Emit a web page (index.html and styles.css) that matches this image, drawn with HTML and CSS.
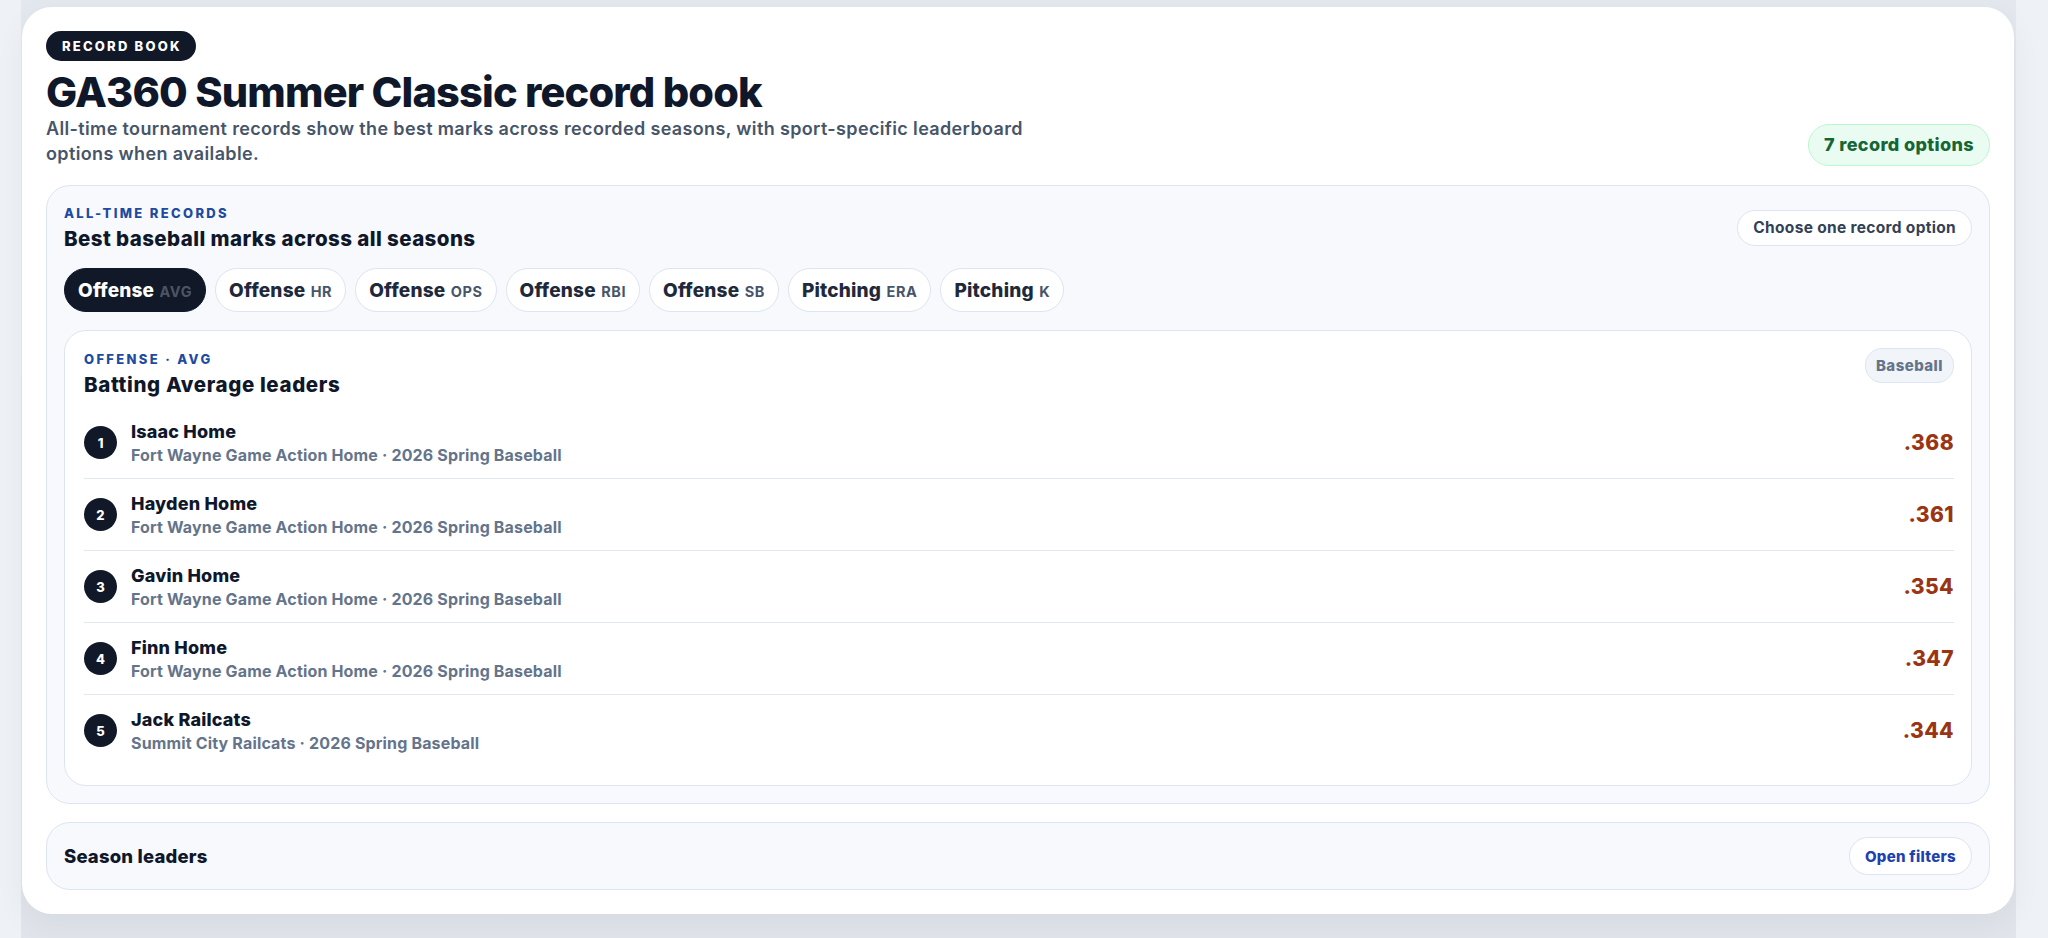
FILE: index.html
```html
<!DOCTYPE html>
<html lang="en">

<head>
    <meta charset="UTF-8">
    <meta name="viewport" content="width=device-width, initial-scale=1.0">
    <title>GA360 Summer Classic record book</title>
    <link rel="stylesheet" href="styles.css">
</head>

<body>
    <div class="shell">
        <main class="card">
            <header class="hero">
                <div class="hero-text">
                    <span class="badge">Record book</span>
                    <h1>GA360 Summer Classic record book</h1>
                    <p>All-time tournament records show the best marks across recorded seasons, with sport-specific leaderboard options when available.</p>
                </div>
                <span class="count-pill">7 record options</span>
            </header>

            <section class="panel records">
                <div class="panel-head">
                    <div>
                        <div class="kicker">All-time records</div>
                        <h2>Best baseball marks across all seasons</h2>
                    </div>
                    <button class="ghost-btn">Choose one record option</button>
                </div>

                <div class="tabs">
                    <button class="tab active">Offense <span>AVG</span></button>
                    <button class="tab">Offense <span>HR</span></button>
                    <button class="tab">Offense <span>OPS</span></button>
                    <button class="tab">Offense <span>RBI</span></button>
                    <button class="tab">Offense <span>SB</span></button>
                    <button class="tab">Pitching <span>ERA</span></button>
                    <button class="tab">Pitching <span>K</span></button>
                </div>

                <div class="leaders">
                    <div class="leaders-head">
                        <div>
                            <div class="kicker">Offense · AVG</div>
                            <h3>Batting Average leaders</h3>
                        </div>
                        <span class="sport-pill">Baseball</span>
                    </div>

                    <ol class="leader-list">
                        <li>
                            <span class="rank">1</span>
                            <div class="who">
                                <div class="name">Isaac Home</div>
                                <div class="meta">Fort Wayne Game Action Home · 2026 Spring Baseball</div>
                            </div>
                            <span class="mark">.368</span>
                        </li>
                        <li>
                            <span class="rank">2</span>
                            <div class="who">
                                <div class="name">Hayden Home</div>
                                <div class="meta">Fort Wayne Game Action Home · 2026 Spring Baseball</div>
                            </div>
                            <span class="mark">.361</span>
                        </li>
                        <li>
                            <span class="rank">3</span>
                            <div class="who">
                                <div class="name">Gavin Home</div>
                                <div class="meta">Fort Wayne Game Action Home · 2026 Spring Baseball</div>
                            </div>
                            <span class="mark">.354</span>
                        </li>
                        <li>
                            <span class="rank">4</span>
                            <div class="who">
                                <div class="name">Finn Home</div>
                                <div class="meta">Fort Wayne Game Action Home · 2026 Spring Baseball</div>
                            </div>
                            <span class="mark">.347</span>
                        </li>
                        <li>
                            <span class="rank">5</span>
                            <div class="who">
                                <div class="name">Jack Railcats</div>
                                <div class="meta">Summit City Railcats · 2026 Spring Baseball</div>
                            </div>
                            <span class="mark">.344</span>
                        </li>
                    </ol>
                </div>
            </section>

            <section class="panel season">
                <h2>Season leaders</h2>
                <button class="ghost-btn link">Open filters</button>
            </section>
        </main>
    </div>
</body>

</html>
```

FILE: styles.css
```css
body {
    font-family: 'Inter', 'Noto Sans', sans-serif;
    background-color: #eef2f6;
    color: #0f172a;
    margin: 0;
    padding: 0;
    height: 938px;
    overflow: hidden;
}

.shell {
    margin-left: 21px;
    width: 1995px;
    min-height: 938px;
    box-sizing: border-box;
    padding: 7px 2px 0 1px;
    background: linear-gradient(180deg, #e3e8ef 0%, #e1e5eb 100%);
}

.card {
    background-color: #fff;
    border-radius: 30px;
    padding: 24px;
    box-shadow: 0 10px 30px rgba(15, 23, 42, 0.05);
}

/* header */

.hero {
    display: flex;
    justify-content: space-between;
    align-items: flex-end;
}

.badge {
    display: inline-block;
    background-color: #111827;
    color: #fff;
    font-size: 13px;
    font-weight: 800;
    letter-spacing: 0.17em;
    text-transform: uppercase;
    line-height: 30px;
    height: 30px;
    padding: 0 14px 0 16px;
    border-radius: 15px;
}

.hero h1 {
    margin: 7px 0 0;
    font-size: 41.5px;
    line-height: 48px;
    font-weight: 800;
    letter-spacing: -0.02em;
    color: #0f172a;
}

.hero p {
    margin: 0;
    max-width: 1010px;
    font-size: 18px;
    line-height: 25px;
    font-weight: 600;
    letter-spacing: 0.02em;
    color: #475569;
}

.count-pill {
    height: 40px;
    line-height: 40px;
    padding: 0 15px;
    border-radius: 21px;
    background-color: #eafcf1;
    border: 1px solid #bbf7d0;
    color: #166534;
    font-size: 18px;
    font-weight: 800;
    letter-spacing: 0.02em;
    white-space: nowrap;
}

/* panels */

.panel {
    background-color: #f7f9fc;
    border: 1px solid #dce5f1;
    border-radius: 24px;
}

.records {
    margin-top: 19px;
    padding: 18px 17px 17px;
}

.panel-head {
    display: flex;
    justify-content: space-between;
    align-items: center;
}

.kicker {
    font-size: 13px;
    line-height: 18px;
    font-weight: 800;
    letter-spacing: 0.18em;
    text-transform: uppercase;
    color: #1e4b9e;
}

.panel h2 {
    margin: 5px 0 0;
    font-size: 20.5px;
    line-height: 24px;
    font-weight: 800;
    letter-spacing: 0.02em;
    color: #0f172a;
}

.ghost-btn {
    font-family: inherit;
    background-color: #fff;
    border: 1px solid #dce5f1;
    border-radius: 18px;
    height: 36px;
    padding: 0 15px;
    font-size: 15.5px;
    font-weight: 700;
    letter-spacing: 0.02em;
    color: #334155;
    cursor: pointer;
}

.ghost-btn.link {
    height: 38px;
    border-radius: 19px;
    font-size: 15px;
    color: #1e40af;
    font-weight: 800;
}

/* tabs */

.tabs {
    display: flex;
    gap: 9px;
    margin-top: 17px;
}

.tab {
    font-family: inherit;
    height: 44px;
    padding: 0 13px;
    border-radius: 22px;
    border: 1px solid #dce5f1;
    background-color: #fff;
    color: #1e293b;
    font-size: 19px;
    font-weight: 800;
    letter-spacing: 0.01em;
    cursor: pointer;
}

.tab span {
    margin-left: 1px;
    font-size: 14.5px;
    font-weight: 700;
    letter-spacing: 0.04em;
    color: #475569;
}

.tab.active {
    background-color: #111827;
    border-color: #111827;
    color: #fff;
}

.tab.active span {
    color: #4b5563;
}

/* leaders */

.leaders {
    margin-top: 18px;
    background-color: #fff;
    border: 1px solid #dce5f1;
    border-radius: 22px;
    padding: 19px 17px 19px 19px;
}

.leaders-head {
    display: flex;
    justify-content: space-between;
    align-items: flex-start;
}

.leaders-head h3 {
    margin: 5px 0 0;
    font-size: 20.5px;
    line-height: 24px;
    font-weight: 800;
    letter-spacing: 0.03em;
}

.sport-pill {
    margin-top: -2px;
    height: 33px;
    line-height: 33px;
    padding: 0 10px;
    border-radius: 17px;
    background-color: #f1f5f9;
    border: 1px solid #dce5f1;
    color: #64748b;
    font-size: 15px;
    font-weight: 800;
    letter-spacing: 0.03em;
}

.leader-list {
    list-style: none;
    margin: 10px 0 0;
    padding: 0;
}

.leader-list li {
    display: flex;
    align-items: center;
    gap: 14px;
    padding: 12px 0;
    border-bottom: 1px solid #e2e8f0;
}

.leader-list li:last-child {
    border-bottom: none;
}

.rank {
    flex: none;
    width: 33px;
    height: 33px;
    border-radius: 50%;
    background-color: #111827;
    color: #fff;
    font-size: 13px;
    font-weight: 800;
    display: flex;
    align-items: center;
    justify-content: center;
}

.who {
    flex: 1;
}

.name {
    font-size: 18px;
    line-height: 25px;
    font-weight: 800;
    letter-spacing: 0.01em;
    color: #0f172a;
}

.meta {
    font-size: 16px;
    line-height: 22px;
    font-weight: 700;
    letter-spacing: 0.01em;
    color: #64748b;
}

.mark {
    font-size: 21px;
    font-weight: 800;
    color: #9a3412;
    letter-spacing: 0.02em;
}

/* season leaders */

.season {
    margin-top: 18px;
    height: 66px;
    padding: 0 17px;
    display: flex;
    justify-content: space-between;
    align-items: center;
}

.season h2 {
    margin: 0;
    font-size: 18.5px;
    letter-spacing: 0.01em;
}
```
